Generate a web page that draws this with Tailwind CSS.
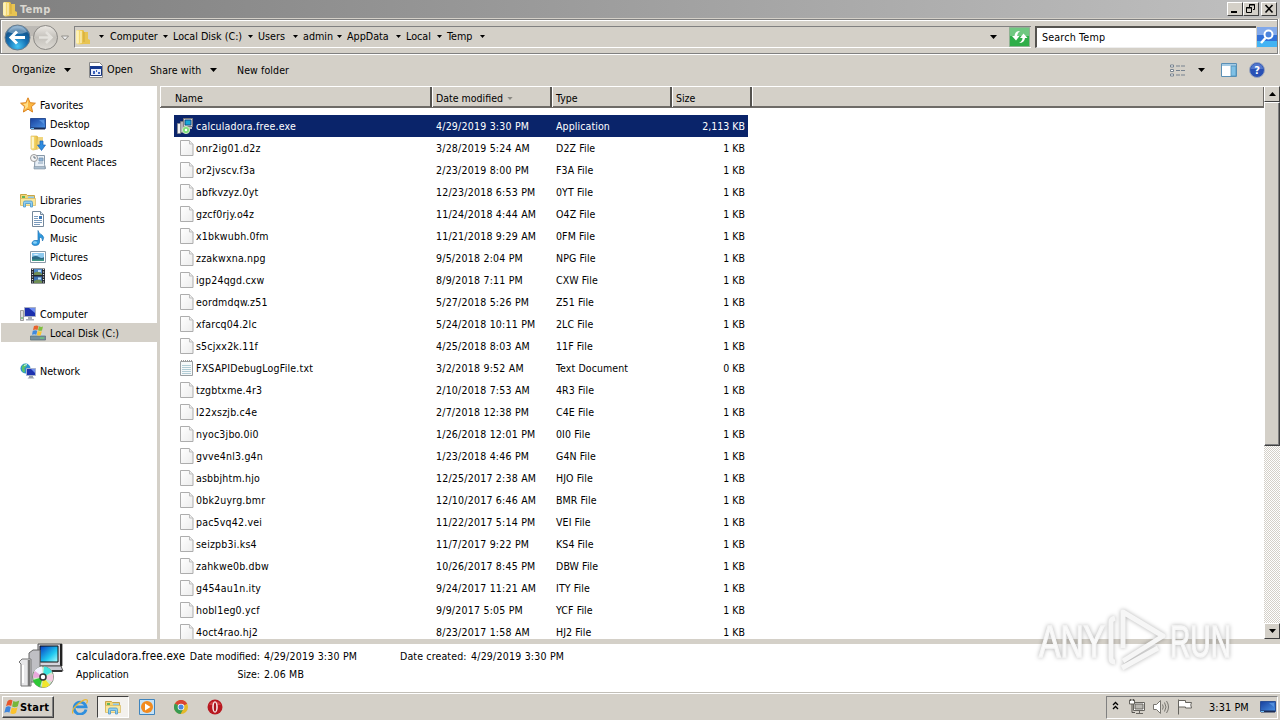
<!DOCTYPE html>
<html lang="en">
<head>
  <meta charset="UTF-8" />
  <meta name="viewport" content="width=device-width, initial-scale=1.0" />
  <title>Temp</title>
  <script src="https://cdn.jsdelivr.net/npm/@tailwindcss/browser@4"></script>
</head>
<body class="relative flex flex-col w-[1280px] h-[720px] overflow-hidden bg-[#d4d0c8] font-['DejaVu_Sans_Condensed','DejaVu_Sans',sans-serif] [font-stretch:condensed] text-[10.5px] leading-[14px] text-black whitespace-nowrap">

  <!-- Shared icons -->
  <svg class="absolute w-0 h-0">
    <defs>
      <linearGradient id="gFolder" x1="0" x2="1"><stop offset="0" stop-color="#fff3b0" /><stop offset=".5" stop-color="#f3d467" /><stop offset="1" stop-color="#e3b93f" /></linearGradient>
      <linearGradient id="gPage" x1="0" y1="0" x2="1" y2="1"><stop offset="0" stop-color="#fff" /><stop offset="1" stop-color="#ececec" /></linearGradient>
      <linearGradient id="gScreen" x1="0" y1="0" x2="1" y2="1"><stop offset="0" stop-color="#173f9c" /><stop offset="1" stop-color="#4a93e6" /></linearGradient>
      <linearGradient id="gCyan" x1="0" y1="0" x2="1" y2="1"><stop offset="0" stop-color="#0838c0" /><stop offset=".6" stop-color="#20c8f0" /><stop offset="1" stop-color="#b0ffff" /></linearGradient>
      <radialGradient id="gBack" cx=".5" cy=".85" r=".85"><stop offset="0" stop-color="#45c5f5" /><stop offset=".45" stop-color="#1671b4" /><stop offset=".75" stop-color="#15578f" /><stop offset="1" stop-color="#8fb5d4" /></radialGradient>
      <linearGradient id="gFwd" x1="0" y1="0" x2="0" y2="1"><stop offset="0" stop-color="#ece9e4" /><stop offset=".5" stop-color="#c4c1bb" /><stop offset="1" stop-color="#dedbd5" /></linearGradient>
    </defs>
    <symbol id="folder" viewBox="0 0 16 16">
      <path d="M2 1h6l1 1v13l-6 .5L1 14V2z" fill="url(#gFolder)" />
      <path d="M9 3h4v7l2 1v4H7l1-2z" fill="#e8c452" />
      <path d="M3 2v12M6 2v12" stroke="#fffbe0" />
      <path d="M9 3v10" stroke="#c79f35" stroke-width=".7" />
    </symbol>
    <symbol id="page" viewBox="0 0 14 16">
      <path d="M.5.5h9l3.500 3.500v11.500H.5z" fill="url(#gPage)" stroke="#adadad" />
      <path d="M9.500.5v3.500h3.500" fill="#eee" stroke="#bdbdbd" />
    </symbol>
    <symbol id="txt" viewBox="0 0 14 16">
      <path d="M.5 1.500h12v14H.5z" fill="#f6f9fa" stroke="#9a9fa2" />
      <path d="M1 1h12" stroke="#999" stroke-dasharray="1 1" stroke-width="2" />
      <path d="M2 5.500h9M2 7.500h9M2 9.500h9M2 11.500h9M2 13.500h9" stroke="#9fc0cb" stroke-width=".8" />
    </symbol>
    <symbol id="setup" viewBox="0 0 46 46">
      <path d="M20 1h24v22H20z" fill="#d5d5dd" stroke="#555" />
      <path d="M22 3h18v16H22z" fill="url(#gCyan)" stroke="#111" />
      <path d="M43 1v22" stroke="#222" stroke-width="2" />
      <path d="M19 23h24l2 5H17z" fill="#c8c8d0" stroke="#555" />
      <path d="M34 27h10v2H34z" fill="#333" />
      <path d="M11 10l4-3h7v32H11z" fill="#bfbfc4" stroke="#666" />
      <path d="M1 19l3-3h9v27H3V21z" fill="#e6e6e8" stroke="#777" />
      <path d="M11 17v26" stroke="#777" stroke-width="2.500" />
      <path d="M5 22v18" stroke="#fff" stroke-width="2" />
      <circle cx="25" cy="34" r="10.500" fill="#cfe8c8" stroke="#7a8a7a" />
      <path d="M25 34L16 28.500A10.500 10.500 0 0 1 24 23.500z" fill="#f3f3ff" />
      <path d="M25 34L26 23.500A10.500 10.500 0 0 1 34 29z" fill="#3fe4e0" />
      <path d="M25 34L35 31A10.500 10.500 0 0 1 34 39z" fill="#f5c9e0" />
      <path d="M25 34L32 42A10.500 10.500 0 0 1 24 44.500z" fill="#f1e62c" />
      <path d="M25 34L22 44A10.500 10.500 0 0 1 15 37z" fill="#2fc836" />
      <path d="M25 34L15 35A10.500 10.500 0 0 1 17 28z" fill="#e9a7dc" />
      <circle cx="25" cy="34" r="3" fill="#fff" stroke="#333" stroke-width="1.500" />
    </symbol>
    <symbol id="setupSmall" viewBox="0 0 16 16">
      <path d="M6.500.5h9v8h-9z" fill="#cfd2da" stroke="#777" /><path d="M8 2h6v5H8z" fill="#19a9d8" stroke="#063a7a" stroke-width=".8" />
      <path d="M8 9h7v2H8z" fill="#b9bcc4" />
      <path d="M3.500 3.500h3v11h-3z" fill="#b3b3b8" stroke="#777" stroke-width=".6" /><path d="M.5 5.500h3v10h-3z" fill="#f2f2f2" stroke="#888" stroke-width=".7" />
      <circle cx="9" cy="12" r="3.600" fill="#7fe07a" stroke="#cfe8c8" /><circle cx="9" cy="12" r="1.200" fill="#fff" />
    </symbol>
    <symbol id="star" viewBox="0 0 16 16">
      <path d="M8 .8l2.100 4.900 5.300.5-4 3.500 1.200 5.300L8 12.200 3.400 15l1.200-5.300-4-3.500 5.300-.5z" fill="#fbb843" stroke="#dc8420" />
      <path d="M8 3v7L4 13l1.500-4L3 7l3.500-.5z" fill="#ffdf8a" />
    </symbol>
    <symbol id="desktop" viewBox="0 0 16 16">
      <path d="M.5 2.500h15v10H.5z" fill="url(#gScreen)" stroke="#2a4f95" />
      <path d="M1 11.500h14v2H1z" fill="#1a2c55" />
      <path d="M1 12.500h3" stroke="#6fc0f5" /><path d="M9 4l5 0v4z" fill="#6ba9ef" opacity=".6" />
    </symbol>
    <symbol id="downloads" viewBox="0 0 16 16">
      <path d="M1 1h6l1 1v12l-5 1-2-1z" fill="url(#gFolder)" stroke="#dcb44a" stroke-width=".6" />
      <path d="M8 2h5v12H7z" fill="#f0d680" /><path d="M3 2v11" stroke="#fffbe0" stroke-width="1.500" />
      <path d="M10 6h3v4h2.500L11.500 15.500 7.500 10H10z" fill="#2e8ce0" stroke="#1b62b5" stroke-width=".7" />
    </symbol>
    <symbol id="recent" viewBox="0 0 16 16">
      <path d="M5 1.500h9.500v9l1 4H4.500z" fill="#e8eff6" stroke="#8798a8" />
      <path d="M4 12.500h11v2.500H4z" fill="#a9bccd" stroke="#8292a1" stroke-width=".6" />
      <path d="M9 4h4v3H9zM8 9h5" fill="#8fb4d8" stroke="#7793ac" stroke-width=".8" />
      <circle cx="4" cy="4" r="3.500" fill="#f5f5f5" stroke="#9a9a9a" /><path d="M4 2v2h2" fill="none" stroke="#456" stroke-width=".8" />
    </symbol>
    <symbol id="libraries" viewBox="0 0 16 16">
      <path d="M.5 2.500h6l1 1h7v9H.5z" fill="#f2d679" stroke="#c9a544" />
      <path d="M2 4h3v2H2z" fill="#60b45c" /><path d="M8 4.500h6v2H8z" fill="#8ac6ee" />
      <path d="M.5 6.500h15v7H.5z" fill="#fae79c" stroke="#d6b75d" stroke-width=".7" />
      <path d="M3.500 15V10.500q0-1.500 1.500-1.500h6q1.500 0 1.500 1.500V15h-2v-3.500h-5V15z" fill="#8fcdf0" stroke="#4a98cc" stroke-width=".8" />
    </symbol>
    <symbol id="documents" viewBox="0 0 16 16">
      <path d="M2.500.5h8l3 3v12h-11z" fill="#fff" stroke="#75889b" />
      <path d="M10.500.5v3h3" fill="#d8e3ef" stroke="#75889b" />
      <path d="M4 5.500h4M4 7.500h4M4 9.500h8M4 11.500h8M4 13.500h6" stroke="#7b9bbd" /><path d="M9 5h3v3H9z" fill="#3e79b8" />
    </symbol>
    <symbol id="music" viewBox="0 0 16 16">
      <path d="M8 .5q.5 3 4 4.500 3 2 .5 6 .5-3.500-3-4v5.500Q9 15.500 5.500 15.500 1.500 15.500 2 12.500 3 9.800 8 10.500z" fill="#2d9be0" stroke="#1c71b5" stroke-width=".7" />
      <ellipse cx="5" cy="12.500" rx="2" ry="1.300" fill="#8bd1f7" />
    </symbol>
    <symbol id="pictures" viewBox="0 0 16 16">
      <path d="M.5 2.500h15v11H.5z" fill="#fff" stroke="#8a9aa8" /><path d="M2 4h12v8H2z" fill="#8ec9ee" />
      <path d="M2 8q4-2 7 0t5 0v4H2z" fill="#2c6a86" /><path d="M2 10.500h12V12H2z" fill="#3f9a85" /><path d="M3 6q3-2 6 0z" fill="#eaf6ff" />
    </symbol>
    <symbol id="videos" viewBox="0 0 16 16">
      <path d="M1 .5h14v15H1z" fill="#252a33" /><path d="M4 1h8v6H4z" fill="#4d87c6" /><path d="M4 8.500h8V15H4z" fill="#3c72b4" />
      <path d="M4 5q4-3 8 1v1H4zM4 13q4-3 8 0v2H4z" fill="#6f8e56" /><path d="M8 2h3v2H8zM8 9.500h3v2H8z" fill="#b7dcf4" />
      <path d="M2.500 1v14M13.500 1v14" stroke="#dfe6ec" stroke-dasharray="1 1.500" stroke-width="1.200" />
    </symbol>
    <symbol id="computer" viewBox="0 0 16 16">
      <path d="M.5 4.500h3v10h-3z" fill="#dcdcdc" stroke="#8a8a8a" stroke-width=".8" /><path d="M1.500 11h1v2h-1z" fill="#39a04d" />
      <path d="M4.500 1.500h11v9h-11z" fill="#1b2fae" stroke="#a8afc3" /><path d="M9 2h6v5z" fill="#6d8df0" />
      <path d="M8 11h4v2h2v1.500H6V13h2z" fill="#a8adb8" />
    </symbol>
    <symbol id="disk" viewBox="0 0 16 16">
      <path d="M3 8h10l2.500 3H.5z" fill="#c8d4da" /><path d="M.5 11h15v4H.5z" fill="#76909c" stroke="#576d77" stroke-width=".7" /><path d="M10 13h4" stroke="#65e070" />
      <path d="M4 1q2.500-1 4.500 0l-1 4Q5.500 4 3 5z" fill="#e8632c" /><path d="M9 1.300q2 1 4 .3l-1 4q-2 .6-4-.3z" fill="#7fbf3d" />
      <path d="M2.800 5.700q2.500-1 4.500 0l-1 4q-2-1-4.300 0z" fill="#4089dc" /><path d="M7.800 6q2 1 4 .3l-1 4q-2 .6-4-.3z" fill="#fbc62f" />
    </symbol>
    <symbol id="network" viewBox="0 0 16 16">
      <circle cx="5.500" cy="5.500" r="5" fill="#2b8fd3" /><path d="M2 3q3-3 5-2 0 3-3 4 2 2 0 5-3-2-2-7z" fill="#5cc36a" /><path d="M4 2.500l3-1" stroke="#c3f2ff" />
      <path d="M6.500 5.500h9v7h-9z" fill="#1e32b0" stroke="#a8b2cc" /><path d="M11 6h4v4z" fill="#7090ee" /><path d="M9 13h4v1l1.500 1.500H7.500L9 14z" fill="#9aa1ae" />
    </symbol>
    <symbol id="flagwin" viewBox="0 0 16 16">
      <path d="M3.500 2.200Q6-.2 8.500 1.500L7.200 7Q4.800 5.500 2 7.200z" fill="#e8562a" /><path d="M9.300 2q3 1.500 6-.5l-1.500 5.700q-3 1.800-5.700.3z" fill="#77b63a" />
      <path d="M1.800 8.200q2.500-1.700 5-.2l-1.300 5.500Q3 12.200.3 13.700z" fill="#3f86dc" /><path d="M7.800 8.500q3 1.500 5.700-.2L12 14q-3 1.800-5.700.2z" fill="#fbc22c" />
    </symbol>
    <symbol id="caret" viewBox="0 0 7 4"><path d="M0 0h7L3.500 4z" /></symbol>
  </svg>

  <!-- Title bar -->
  <div class="flex items-center h-[18px] shrink-0 pl-[2px] pr-[3px] bg-linear-to-r from-[#808080] to-[#c0c0c0]">
    <svg class="w-4 h-4"><use href="#folder" /></svg>
    <span class="ml-[2px] pt-px text-[11px] font-bold tracking-[0.3px] text-[#dad7d0]">Temp</span>
    <div class="flex ml-auto">
      <div class="w-4 h-[14px] bg-[#d4d0c8] border border-t-white border-l-white border-r-[#404040] border-b-[#404040]"><svg class="block w-[14px] h-3"><path d="M3 8h6v2H3z" /></svg></div>
      <div class="w-4 h-[14px] bg-[#d4d0c8] border border-t-white border-l-white border-r-[#404040] border-b-[#404040]"><svg class="block w-[14px] h-3" fill="none" stroke="#000"><path d="M5.500 5V1.500h5v5H9M5 2h6M2.500 4.500h5v5h-5zM2 5h6" /></svg></div>
      <div class="w-4 h-[14px] ml-[2px] bg-[#d4d0c8] border border-t-white border-l-white border-r-[#404040] border-b-[#404040]"><svg class="block w-[14px] h-3" stroke="#000" stroke-width="1.600"><path d="M3.500 2l7 7.500M10.500 2l-7 7.500" /></svg></div>
    </div>
  </div>

  <!-- Address bar -->
  <div class="h-9 shrink-0 pt-px">
    <div class="flex items-center h-[35px] mr-[2px] border-t border-l border-b border-r border-[#808080] shadow-[inset_1px_1px_0_#fff,0_1px_0_#fff,1px_0_0_#fff]">
      <svg class="w-[72px] h-8 shrink-0">
        <path d="M16 5h28v10H16z" fill="#bdbab5" />
        <circle cx="16.500" cy="16.500" r="12.500" fill="url(#gBack)" stroke="#687a8a" />
        <path d="M7 11a10.500 10 0 0 1 19 0Q17 15 7 11z" fill="#fff" opacity=".35" />
        <path d="M16 10.500l-6 6 6 6M10.500 16.500H24" fill="none" stroke="#fff" stroke-width="3" />
        <circle cx="44.500" cy="16.500" r="12" fill="url(#gFwd)" stroke="#8a8884" />
        <path d="M45 11l5.500 5.500L45 22M50 16.500H38" fill="none" stroke="#e4e2dd" stroke-width="2.500" />
        <path d="M60.500 15h7L64 19z" fill="#eee" stroke="#8b8984" stroke-width=".9" />
      </svg>
      <div class="flex items-center w-[957px] h-[22px] ml-px border-t border-l border-[#808080] border-b border-b-white">
        <svg class="w-4 h-4"><use href="#folder" /></svg>
        <svg class="w-[5px] h-[3px] ml-2 mr-[6px]"><use href="#caret" /></svg>
        <div class="flex text-[10.700px]">
          <div class="flex items-center justify-between w-[63px] pr-[5px]">Computer<svg class="w-[5px] h-[3px]"><use href="#caret" /></svg></div>
          <div class="flex items-center justify-between w-[85px] pr-[5px]">Local Disk (C:)<svg class="w-[5px] h-[3px]"><use href="#caret" /></svg></div>
          <div class="flex items-center justify-between w-[45px] pr-[5px]">Users<svg class="w-[5px] h-[3px]"><use href="#caret" /></svg></div>
          <div class="flex items-center justify-between w-[44px] pr-[5px]">admin<svg class="w-[5px] h-[3px]"><use href="#caret" /></svg></div>
          <div class="flex items-center justify-between w-[59px] pr-[5px]">AppData<svg class="w-[5px] h-[3px]"><use href="#caret" /></svg></div>
          <div class="flex items-center justify-between w-[41px] pr-[5px]">Local<svg class="w-[5px] h-[3px]"><use href="#caret" /></svg></div>
          <div class="flex items-center justify-between w-[43px] pr-[5px]">Temp<svg class="w-[5px] h-[3px]"><use href="#caret" /></svg></div>
        </div>
        <svg class="w-[7px] h-1 ml-auto mr-[12px]"><use href="#caret" /></svg>
        <svg class="w-[21px] h-5 mr-[1px]">
          <path d="M.5.500h20v19H.5z" fill="#2fae49" stroke="#8fb292" /><path d="M1 1h19v8H1z" fill="#8cd39a" opacity=".7" />
          <path d="M11 4Q6 4 5.500 9H3L7 13.500l3.500-4.500H8q0-3 3-5z" fill="#fff" /><path d="M10 16q5.500 0 6-5H18.500l-4-4.500L11 11h2.500q0 3-3.500 5z" fill="#fff" />
        </svg>
      </div>
      <div class="flex items-center h-[22px] w-[221px] ml-[4px] pl-[5px] pt-px bg-white border-t-2 border-l-2 border-[#55534f] border-b border-b-[#eee] text-[10.700px] tracking-[0.15px]">Search Temp</div>
      <svg class="w-5 h-5 ml-px">
        <path d="M0 0h20v20H0z" fill="#3170d8" /><path d="M0 0h20v8H0z" fill="#82a9ea" /><path d="M0 14h20v6H0z" fill="#43b3f3" />
        <circle cx="11.500" cy="7.500" r="4" fill="#4b83dd" stroke="#fff" stroke-width="2" /><path d="M8.500 11L4 16" stroke="#fff" stroke-width="2.500" />
      </svg>
    </div>
  </div>

  <!-- Command bar -->
  <div class="flex items-center h-8 shrink-0 pl-3 pr-[15px] pb-px border-t border-white">
    <div class="flex items-center w-[77px]"><span class="w-[52px] text-[10.800px]">Organize</span><svg class="w-[7px] h-1"><use href="#caret" /></svg></div>
    <svg class="w-[14px] h-4" viewBox="0 0 14 16"><path d="M.5.500h10l3 3v12H.5z" fill="#fff" stroke="#888" /><path d="M1.500 4.500h11v9h-11z" fill="#e8eefc" stroke="#18357e" /><path d="M1 4h12v3H1z" fill="#173a90" /><path d="M4 9h2v3H4zM7 8h1v2H7zM9 10h2v2H9z" fill="#3a62bd" /></svg>
    <span class="w-[43px] ml-1 text-[10.800px]">Open</span>
    <div class="flex items-center w-[87px]"><span class="w-[60px] tracking-[0.1px]">Share with</span><svg class="w-[7px] h-1"><use href="#caret" /></svg></div>
    <span class="tracking-[0.1px]">New folder</span>
    <svg class="w-4 h-[13px] ml-auto mr-[13px]" fill="none" stroke="#76828f"><path d="M1.500 1h3v2h-3zM1.500 5.500h3v2h-3zM1.500 10h3v2h-3z" fill="#fff" /><path d="M7 2h4M12 2h4M7 6.500h4M12 6.500h4M7 11h4M12 11h4" /></svg>
    <svg class="w-[7px] h-1 mr-[16px]"><use href="#caret" /></svg>
    <svg class="w-4 h-[14px] mr-[12px]"><path d="M.5.500h15v13H.5z" fill="#fff" stroke="#5a8fb5" /><path d="M1 1h14v2H1z" fill="#a4cbe5" /><path d="M10 3h5v10h-5z" fill="#7fc0e5" stroke="#4f8fb8" stroke-width=".8" /></svg>
    <svg class="w-4 h-4"><circle cx="8" cy="8" r="7.500" fill="#2850b5" stroke="#9ba6bd" /><path d="M2 7a6 5.500 0 0 1 12 0z" fill="#7c9ee5" opacity=".5" /><text x="8" y="12" text-anchor="middle" fill="#fff" font-size="11" font-weight="bold">?</text></svg>
  </div>

  <!-- Navigation + file list -->
  <div class="flex h-[553px] shrink-0 bg-white">
    <div id="nav" class="w-[156px] ml-px pt-[9px] text-[10.700px]"></div>
    <div class="w-[3px] bg-[#d4d0c8]"></div>

    <div class="flex flex-col w-[1104px] overflow-hidden">
      <div class="flex h-[22px] shrink-0 bg-[#d4d0c8] border-t border-t-white border-b-2 border-b-[#6e6b67]">
        <div class="w-[272px] h-5 pl-[15px] pt-[4px] border-l border-l-white border-r-2 border-r-[#55534f]"><span class="-ml-px">Name</span></div>
        <div class="flex w-[120px] h-5 pl-[3px] pt-[4px] border-l border-l-white border-r-2 border-r-[#55534f]">Date modified<svg class="w-[6px] h-[3px] ml-1 mt-[6px]" fill="#8a8883"><use href="#caret" /></svg></div>
        <div class="w-[120px] h-5 pl-[3px] pt-[4px] border-l border-l-white border-r-2 border-r-[#55534f]">Type</div>
        <div class="w-[80px] h-5 pl-[3px] pt-[4px] border-l border-l-white border-r-2 border-r-[#55534f]">Size</div>
        <div class="flex-1 border-l border-white border-r border-r-[#6e6b67]"></div>
      </div>
      <div id="files" class="pt-[7px] pl-[14px]"></div>
    </div>

    <!-- Scrollbar -->
    <div class="flex flex-col w-4 bg-[repeating-conic-gradient(#fff_0_25%,#d4d0c8_0_50%)] bg-size-[2px_2px]">
      <div class="flex items-center justify-center w-4 h-4 bg-[#d4d0c8] border border-t-white border-l-white border-r-[#404040] border-b-[#404040]"><svg class="w-[7px] h-1 rotate-180"><use href="#caret" /></svg></div>
      <div class="w-4 h-[344px] bg-[#d4d0c8] border border-t-white border-l-white border-r-[#404040] border-b-[#404040] shadow-[inset_-1px_-1px_0_#808080]"></div>
      <div class="flex items-center justify-center w-4 h-4 mt-auto bg-[#d4d0c8] border border-t-white border-l-white border-r-[#404040] border-b-[#404040]"><svg class="w-[7px] h-1"><use href="#caret" /></svg></div>
    </div>
  </div>

  <!-- Details pane -->
  <div class="flex h-[54px] shrink-0 pl-[18px] bg-white border-t-5 border-[#d4d0c8] border-b border-b-[#c2bfb8]">
    <svg class="w-[46px] h-[46px] -mt-px"><use href="#setup" /></svg>
    <div class="w-[114px] pl-3 pt-[5px]">
      <div class="h-[18px] text-[11.600px] tracking-[0.17px]">calculadora.free.exe</div>
      <div>Application</div>
    </div>
    <div class="grid grid-cols-[82px_96px] gap-x-1 auto-rows-[18px] content-start pt-[5px]">
      <span class="text-right">Date modified:</span><span class="tracking-[0.22px]">4/29/2019 3:30 PM</span>
      <span class="text-right">Size:</span><span class="tracking-[0.22px]">2.06 MB</span>
    </div>
    <div class="flex pl-[40px] pt-[5px]"><span class="w-[71px] tracking-[0.15px]">Date created:</span><span class="tracking-[0.22px]">4/29/2019 3:30 PM</span></div>
  </div>

  <!-- Taskbar -->
  <div class="flex items-center flex-1 pl-[2px] pr-[2px] border-t border-white">
    <div class="flex items-center w-[52px] h-[22px] pl-px border border-t-white border-l-white border-r-[#404040] border-b-[#404040] shadow-[inset_-1px_-1px_0_#808080] text-[11px] font-bold tracking-[0.2px]"><svg class="w-4 h-4"><use href="#flagwin" /></svg><span class="pt-px">Start</span></div>
    <svg class="w-4 h-4 ml-[18px]" viewBox="0 0 16 16">
      <path d="M14 10.500A6 6 0 1 1 14 7.800H5" fill="none" stroke="#2f8fdd" stroke-width="2.800" /><path d="M4 8h9" stroke="#2f8fdd" stroke-width="2" />
      <path d="M1 14.500Q-1 11 6 5q7-5.500 9-4 1 1-.5 3.500" fill="none" stroke="#eab831" stroke-width="1.200" />
    </svg>
    <div class="flex items-center justify-center w-8 h-[22px] ml-[9px] bg-[#f3f1ed] border border-t-[#404040] border-l-[#404040] border-r-white border-b-white"><svg class="w-4 h-4"><use href="#libraries" /></svg></div>
    <svg class="w-4 h-4 ml-[10px]"><path d="M.5.500h15v15H.5z" fill="#c5e2f7" stroke="#3f84bd" /><circle cx="8" cy="8" r="6" fill="#f28a1e" /><path d="M6 4.500l5.500 3.500L6 11.500z" fill="#fff" /></svg>
    <svg class="w-[14px] h-[14px] ml-[19px]" viewBox="0 0 16 16"><circle cx="8" cy="8" r="8" fill="#e5b92a" /><path d="M8 8L1 4A8 8 0 0 1 15 4z" fill="#d94435" /><path d="M1 4A8 8 0 0 0 7.500 16l3.500-6.500L8 8z" fill="#389a52" /><path d="M1 4h14l-2 1H8z" fill="#d94435" /><circle cx="8" cy="8" r="3.800" fill="#fff" /><circle cx="8" cy="8" r="2.900" fill="#4a86e0" /></svg>
    <svg class="w-4 h-4 ml-[19px]"><circle cx="8" cy="8" r="7.500" fill="#b81820" /><path d="M2 6a6.500 5.500 0 0 1 12 0z" fill="#e25a5a" opacity=".6" /><ellipse cx="8" cy="8" rx="2.800" ry="5.800" fill="#f7eaea" /><ellipse cx="8" cy="8" rx="1.200" ry="4.500" fill="#a9141c" /></svg>

    <div class="flex items-center w-[172px] h-[23px] ml-auto border border-t-[#808080] border-l-[#808080] border-r-white border-b-white">
      <svg class="w-[7px] h-[9px] ml-[5px] mb-1" fill="none" stroke="#000" stroke-width="1.300"><path d="M1 4l2.500-2.500L6 4M1 8l2.500-2.500L6 8" /></svg>
      <svg class="w-4 h-4 ml-[10px]" fill="none" stroke="#66645f"><path d="M4.500 3.500h11v8h-11z" fill="#fff" /><path d="M6 5h8v5H6z" fill="#b9b7b2" /><path d="M7 14.500h7M10.500 12v2" /><path d="M.5 1v4h5V1z" fill="#fff" /><path d="M1.500 0v2M4.500 0v2M3 5v8.500h3" stroke="#55534f" /></svg>
      <svg class="w-[17px] h-4 ml-[8px]" fill="none" stroke="#77756f"><path d="M.5 5.500h3l4-4v13l-4-4h-3z" fill="#fff" /><path d="M9.500 5.500q1.500 2.500 0 5M11.500 3.500q3 4.500 0 9M13.500 2q4 6 0 12" /></svg>
      <svg class="w-4 h-4 ml-[7px]" fill="none" stroke="#66645f"><path d="M1.500.5v15" /><path d="M1.500 1.500h7v2h6q-1.500 2 0 5.500h-6v-1h-7z" fill="#fff" /></svg>
      <span class="w-[40px] ml-[16px] pt-px text-[10.800px] tracking-[0.1px]">3:31 PM</span>
      <svg class="w-4 h-4 ml-[11px]"><use href="#desktop" /></svg>
    </div>
  </div>

  <!-- Watermark -->
  <svg class="absolute left-[1030px] top-[594px] w-[250px] h-[100px] drop-shadow-[0_0_2px_rgba(0,0,0,0.3)]" fill="none" stroke="#f6f6f6">
    <text x="9" y="63" textLength="66" lengthAdjust="spacingAndGlyphs" font-family="Liberation Sans" font-size="44" fill="#fafafa" stroke-width="1.500">ANY</text>
    <text x="140" y="63" textLength="61" lengthAdjust="spacingAndGlyphs" font-family="Liberation Sans" font-size="44" fill="#fafafa" stroke-width="1.500">RUN</text>
    <path d="M93 54V18l40 24-40 25M85 24q-4 1-4 4v36q0 4 4 4M92 74l36-20" stroke-width="5" stroke-linejoin="round" />
  </svg>

  <script>
  const navItems = [
    ['star', 'Favorites', 0], ['desktop', 'Desktop', 1], ['downloads', 'Downloads', 1], ['recent', 'Recent Places', 1], null,
    ['libraries', 'Libraries', 0], ['documents', 'Documents', 1], ['music', 'Music', 1], ['pictures', 'Pictures', 1], ['videos', 'Videos', 1], null,
    ['computer', 'Computer', 0], ['disk', 'Local Disk (C:)', 1], null,
    ['network', 'Network', 0],
  ];

  const files = [
    ['calculadora.free.exe', '4/29/2019 3:30 PM', 'Application', '2,113 KB'],
    ['onr2ig01.d2z', '3/28/2019 5:24 AM', 'D2Z File', '1 KB'],
    ['or2jvscv.f3a', '2/23/2019 8:00 PM', 'F3A File', '1 KB'],
    ['abfkvzyz.0yt', '12/23/2018 6:53 PM', '0YT File', '1 KB'],
    ['gzcf0rjy.o4z', '11/24/2018 4:44 AM', 'O4Z File', '1 KB'],
    ['x1bkwubh.0fm', '11/21/2018 9:29 AM', '0FM File', '1 KB'],
    ['zzakwxna.npg', '9/5/2018 2:04 PM', 'NPG File', '1 KB'],
    ['igp24qgd.cxw', '8/9/2018 7:11 PM', 'CXW File', '1 KB'],
    ['eordmdqw.z51', '5/27/2018 5:26 PM', 'Z51 File', '1 KB'],
    ['xfarcq04.2lc', '5/24/2018 10:11 PM', '2LC File', '1 KB'],
    ['s5cjxx2k.11f', '4/25/2018 8:03 AM', '11F File', '1 KB'],
    ['FXSAPIDebugLogFile.txt', '3/2/2018 9:52 AM', 'Text Document', '0 KB'],
    ['tzgbtxme.4r3', '2/10/2018 7:53 AM', '4R3 File', '1 KB'],
    ['l22xszjb.c4e', '2/7/2018 12:38 PM', 'C4E File', '1 KB'],
    ['nyoc3jbo.0i0', '1/26/2018 12:01 PM', '0I0 File', '1 KB'],
    ['gvve4nl3.g4n', '1/23/2018 4:46 PM', 'G4N File', '1 KB'],
    ['asbbjhtm.hjo', '12/25/2017 2:38 AM', 'HJO File', '1 KB'],
    ['0bk2uyrg.bmr', '12/10/2017 6:46 AM', 'BMR File', '1 KB'],
    ['pac5vq42.vei', '11/22/2017 5:14 PM', 'VEI File', '1 KB'],
    ['seizpb3i.ks4', '11/7/2017 9:22 PM', 'KS4 File', '1 KB'],
    ['zahkwe0b.dbw', '10/26/2017 8:45 PM', 'DBW File', '1 KB'],
    ['g454au1n.ity', '9/24/2017 11:21 AM', 'ITY File', '1 KB'],
    ['hobl1eg0.ycf', '9/9/2017 5:05 PM', 'YCF File', '1 KB'],
    ['4oct4rao.hj2', '8/23/2017 1:58 AM', 'HJ2 File', '1 KB'],
  ];

  document.getElementById('nav').innerHTML = navItems.map(item => {
    if (!item) return '<div class="h-[19px]"></div>';
    const [icon, label, level] = item;
    const indent = level ? 'pl-[29px]' : 'pl-[19px]';
    const selected = icon === 'disk' ? 'bg-[#d4d0c8]' : '';
    return `<div class="flex items-center gap-1 h-[19px] ${indent} ${selected}"><svg class="w-4 h-4 shrink-0"><use href="#${icon}" /></svg><span class="pt-[2px]">${label}</span></div>`;
  }).join('');

  document.getElementById('files').innerHTML = files.map(([name, date, type, size], i) => {
    const row = i === 0 ? 'bg-[#0a246a] text-white' : '';
    let icon = '<svg class="w-[14px] h-4 ml-[6px] mr-[2px] mb-px"><use href="#page" /></svg>';
    if (i === 0) icon = '<svg class="w-4 h-4 ml-[3px] mr-[3px]"><use href="#setupSmall" /></svg>';
    if (name.endsWith('.txt')) icon = icon.replace('#page', '#txt');
    return `<div class="flex items-center w-[574px] h-[22px] ${row}">
      <div class="flex items-center w-[262px] tracking-[0.2px]">${icon}${name}</div>
      <div class="w-[120px] tracking-[0.22px]">${date}</div>
      <div class="w-[100px] tracking-[0.1px]">${type}</div>
      <div class="flex-1 pr-[3px] text-right">${size}</div>
    </div>`;
  }).join('');
  </script>
</body>
</html>
